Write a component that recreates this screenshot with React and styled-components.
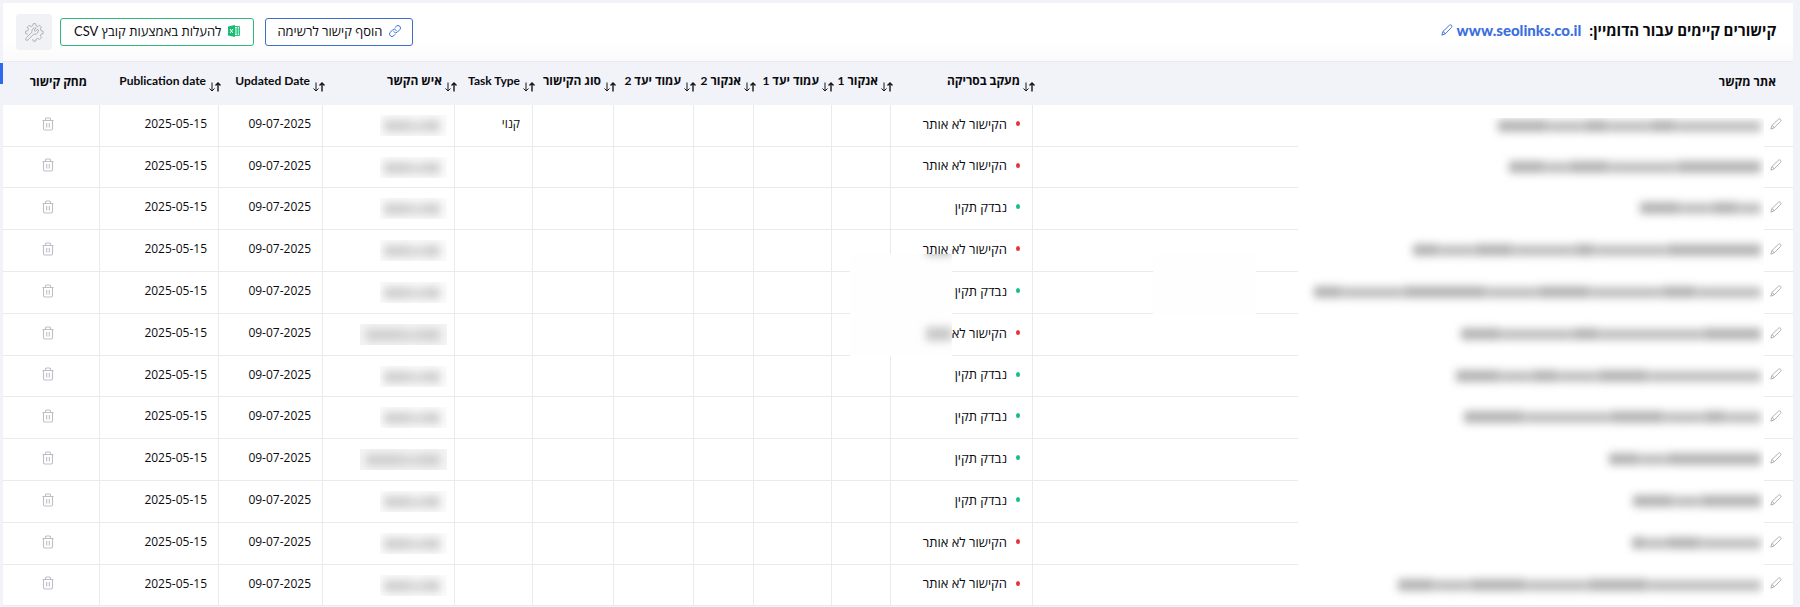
import React, { useState } from "react";
import styled, { createGlobalStyle } from "styled-components";

const GlobalStyle = createGlobalStyle`
  * {
    box-sizing: border-box;
  }
  body {
    margin: 0;
    background-color: #f1f3f9;
    color: #0b0b0f;
    font-family: Lato, "Open Sans", "Noto Sans", "Liberation Sans", sans-serif;
    font-size: 12px;
  }
  button {
    font-family: inherit;
    cursor: pointer;
  }
`;

const Page = styled.div`
  display: flex;
  align-items: flex-start;
  padding: 3px 7px 0 0;
`;

const SideTab = styled.div`
  flex: none;
  width: 3px;
  height: 21px;
  margin-top: 60px;
  background-color: #2f68f0;
`;

const Card = styled.main`
  flex: 1;
  min-width: 0;
  background-color: white;
  border-radius: 2px;
`;

const Toolbar = styled.header`
  display: flex;
  justify-content: space-between;
  align-items: center;
  height: 58px;
  padding: 0 17px 0 13px;
  background: linear-gradient(white 65%, #fafafc);
`;

const Title = styled.h1`
  display: flex;
  align-items: center;
  gap: 8px;
  margin: 0;
  padding-bottom: 4px;
  font-size: 15px;
  font-weight: 700;
  line-height: 20px;
`;

const Domain = styled.div`
  display: flex;
  align-items: center;
  gap: 4px;
`;

const DomainLink = styled.a`
  color: #3b6fe0;
  font-weight: 900;
  text-decoration: none;
`;

const Actions = styled.div`
  display: flex;
  align-items: center;
  gap: 11px;
`;

const ActionButton = styled.button`
  display: flex;
  align-items: center;
  gap: 7px;
  height: 28px;
  padding: 0 ${(props) => props.$pad}px 2px;
  border: 1px solid ${(props) => props.$color};
  border-radius: 3px;
  background-color: white;
  color: #0b0b0f;
  font-size: 13px;
`;

const SettingsButton = styled.button`
  display: flex;
  align-items: center;
  justify-content: center;
  width: 36px;
  height: 36px;
  margin-right: -3px;
  padding: 0;
  border: none;
  border-radius: 3px;
  background-color: #f1f2f6;
`;

const IconButton = styled.button`
  display: flex;
  padding: 0;
  border: none;
  background: none;
`;

const Table = styled.table`
  width: 100%;
  table-layout: fixed;
  border-collapse: separate;
  border-spacing: 0;
`;

const Column = styled.col`
  width: ${(props) => (props.$width ? `${props.$width}px` : "auto")};
`;

const HeadCell = styled.th`
  height: 44px;
  padding: 0 ${(props) => props.$pad}px 5px 0;
  border-top: 1px solid #e9ebf1;
  background-color: #f1f3f8;
  font-size: 12px;
  font-weight: 700;
  text-align: right;
  white-space: nowrap;
`;

const SortButton = styled.button`
  display: flex;
  align-items: center;
  gap: 3px;
  margin-right: -3px;
  padding: 0;
  border: none;
  background: none;
  color: inherit;
  font-size: 12px;
  font-weight: 700;
  line-height: 18px;

  svg {
    margin-top: 12px;
  }
`;

const Row = styled.tr`
  height: 42px;

  &:nth-child(5n + 2) {
    height: 41px;
  }
`;

const Cell = styled.td`
  position: relative;
  padding: 0 12px 4px 0;
  border-bottom: 1px solid #e9eaee;
  border-left: ${(props) => (props.$last ? "none" : "1px solid #e9eaee")};
  white-space: nowrap;
`;

const SiteCell = styled(Cell)`
  padding-right: 11px;
`;

const DateCell = styled(Cell)`
  padding-right: 11px;
  font-family: "Open Sans", "Noto Sans", sans-serif;
`;

const Status = styled.div`
  display: flex;
  align-items: center;
  gap: 9px;
  font-size: 13px;
  line-height: 18px;
`;

const Dot = styled.span`
  width: 4px;
  height: 5px;
  border-radius: 50%;
  background-color: ${(props) => (props.$ok ? "#12c07c" : "#e8303a")};
`;

const Centered = styled.div`
  display: flex;
  justify-content: center;
  padding-left: 6px;
`;

// covers the private part of a cell, lines included
const SiteMask = styled.div`
  position: absolute;
  top: ${(props) => (props.$first ? 13 : 0)}px;
  bottom: ${(props) => (props.$last ? 0 : -1)}px;
  right: 29px;
  width: 466px;
  overflow: hidden;
  background-color: white;
`;

const ContactMask = styled.div`
  width: ${(props) => (props.$wide ? 87 : 67)}px;
  height: 21px;
  margin: 4px -5px 0 0;
  padding: 5px 4px;
  overflow: hidden;
  background-color: ${(props) => (props.$wide ? "#f4f4f4" : "#fbfbfb")};
`;

const Smudge = styled.div`
  display: flex;
  direction: ltr;
  justify-content: flex-end;
  gap: 1px;
  margin-top: ${(props) => props.$top}px;
  padding-right: 3px;
  filter: blur(4px);

  i {
    height: 12px;
    background-color: ${(props) => props.$color};
  }
  i:nth-child(2n) {
    height: 11px;
    margin-top: 1px;
    opacity: 0.85;
  }
`;

const Patch = styled.div`
  position: absolute;
  top: ${(props) => props.$top || 0}px;
  bottom: -1px;
  left: ${(props) => props.$left}px;
  right: ${(props) => props.$right}px;
  z-index: 1;
  background-color: #fefefe;
  overflow: hidden;
`;

const Stain = styled.div`
  width: 26px;
  height: 14px;
  margin-top: ${(props) => props.$top}px;
  background-color: ${(props) => props.$color};
  filter: blur(4px);
`;

const columns = [
  { label: "אתר מקשר", pad: 17 },
  { label: "מעקב בסריקה", width: 142, sort: true },
  { label: "אנקור 1", width: 59, sort: true },
  { label: "עמוד יעד 1", width: 78, sort: true },
  { label: "אנקור 2", width: 60, sort: true },
  { label: "עמוד יעד 2", width: 80, sort: true },
  { label: "סוג הקישור", width: 81, sort: true },
  { label: "Task Type", width: 78, sort: true },
  { label: "איש הקשר", width: 132, sort: true },
  { label: "Updated Date", width: 104, sort: true },
  { label: "Publication date", width: 119, sort: true },
  { label: "מחק קישור", width: 96, pad: 12 },
];

// site: widths of the hidden words, left to right
const links = [
  { ok: false, site: [50, 34, 24, 40, 26, 84], task: "קנוי" },
  { ok: false, site: [36, 22, 40, 66, 84] },
  { ok: true, site: [40, 30, 26, 22] },
  { ok: false, site: [26, 34, 38, 60, 20, 70, 94], patch: "below" },
  { ok: true, site: [28, 60, 82, 50, 52, 70, 34, 64], patch: "full" },
  { ok: false, site: [40, 70, 26, 102, 58], patch: "word", wide: true },
  { ok: true, site: [44, 30, 26, 38, 50, 112] },
  { ok: true, site: [60, 84, 54, 38, 22, 34] },
  { ok: true, site: [30, 26, 94], wide: true },
  { ok: true, site: [40, 26, 60] },
  { ok: false, site: [14, 18, 34, 60] },
  { ok: false, site: [36, 34, 56, 60, 60, 112] },
];

function PencilIcon({ color = "#a9adb6" }) {
  return (
    <svg width="12" height="12" viewBox="0 0 14 14" fill="none" stroke={color} strokeWidth="1.1" strokeLinejoin="round">
      <path d="M1 13 2.200 8.800 9.800 1.500q1.200-1.100 2.500 0 1.100 1.300 0 2.500L4.800 11.600zM2.200 8.800q2 .6 2.600 2.800" />
    </svg>
  );
}

function LinkIcon() {
  return (
    <svg width="12" height="12" viewBox="0 0 24 24" fill="none" stroke="#3b6fe0" strokeWidth="2" strokeLinecap="round">
      <path d="M9.500 13.500a5 5 0 0 0 7.500.5l4.500-4.500a4.900 4.900 0 0 0-7-7l-2.500 2.500" />
      <path d="M14.500 10.500a5 5 0 0 0-7.500-.5l-4.500 4.500a4.900 4.900 0 0 0 7 7l2.500-2.500" />
    </svg>
  );
}

function ExcelIcon() {
  return (
    <svg width="12" height="12" viewBox="0 0 12 12">
      <path d="M0 1.500 7 0v12L0 10.500z" fill="#18bd74" />
      <path d="M2 4l3 4M5 4 2 8" stroke="white" strokeWidth="1" />
      <path d="M7 1.500h4.500v9H7M7 4h4.500M7 6h4.500M7 8h4.500M9.300 1.500v9" fill="none" stroke="#18bd74" strokeWidth="0.9" />
    </svg>
  );
}

function GearIcon() {
  return (
    <svg width="20" height="20" viewBox="0 0 24 24" fill="none" stroke="#a9acb5" strokeWidth="1.1" strokeLinejoin="round">
      <path d="M4.500 14.600 2 14v-3l2.600-.6.8-1.900L4 6.200 6.200 4l2.300 1.400 1.900-.8L11 2h3l.6 2.600 1.900.8L18.800 4 21 6.200l-1.400 2.300.8 1.900 2.600.6v3l-2.600.6-.8 1.900 1.400 2.300-2.200 2.200-2.300-1.400-1.900.8L14 23h-3l-.6-2.500" />
      <path d="M16.500 8.500 14 11l-1.300-.3-.3-1.300 2.200-2.300a4 4 0 0 0-5 5L2.500 19.200q-1.200 1.300-.1 2.400t2.400-.1l7-7a4 4 0 0 0 4.700-6z" />
    </svg>
  );
}

function TrashIcon() {
  return (
    <svg width="12" height="14" viewBox="0 0 12 14" fill="none" stroke="#bcbfc6" strokeWidth="1.1">
      <path d="M.5 3.500h11M3.500 3.500v-1.500q0-1 1-1h3q1 0 1 1v1.500M1.500 3.500v8q0 1.500 1.500 1.500h6q1.500 0 1.500-1.500v-8M4.700 6v4.500M7.300 6v4.500" />
    </svg>
  );
}

function SortIcon() {
  return (
    <svg width="12" height="10" viewBox="0 0 12 10" fill="none" stroke="#15151a">
      <path d="M3 .5v8.500M.5 6.500 3 9l2.500-2.500" strokeWidth="1" />
      <path d="M9 9.500V1M6.500 3.500 9 1l2.500 2.500" strokeWidth="1.4" />
    </svg>
  );
}

function Hidden({ words, top, color }) {
  return (
    <Smudge $top={top} $color={color}>
      {words.map((w, index) => (
        <i key={index} style={{ width: w }} />
      ))}
    </Smudge>
  );
}

function LinkRow({ link, first, last, onDelete }) {
  const patchTop = link.patch === "below" ? 24 : 0;

  return (
    <Row>
      <SiteCell>
        <IconButton aria-label="עריכה">
          <PencilIcon />
        </IconButton>
        <SiteMask $first={first} $last={last}>
          <Hidden words={link.site} top={first ? 2 : 14} color="#b4b4b4" />
        </SiteMask>
        {(link.patch === "below" || link.patch === "full") && <Patch $top={patchTop} $left={120} $right={537} />}
      </SiteCell>
      <Cell>
        <Status>
          <Dot $ok={link.ok} />
          {link.ok ? "נבדק תקין" : "הקישור לא אותר"}
        </Status>
        {link.patch && (
          <Patch $top={patchTop} $left={-1} $right={80}>
            {link.patch === "below" && <Stain $top={-13} $color="#b4b4b4" />}
            {link.patch === "word" && <Stain $top={13} $color="#c8c8c8" />}
          </Patch>
        )}
      </Cell>
      <Cell>{link.patch && <Patch $top={patchTop} $left={18} $right={0} />}</Cell>
      <Cell />
      <Cell />
      <Cell />
      <Cell />
      <Cell>{link.task}</Cell>
      <Cell>
        <ContactMask $wide={link.wide}>
          <Hidden words={link.wide ? [38, 12, 22] : [28, 10, 18]} top={0} color="#cfcfcf" />
        </ContactMask>
      </Cell>
      <DateCell>09-07-2025</DateCell>
      <DateCell>2025-05-15</DateCell>
      <Cell $last>
        <Centered>
          <IconButton aria-label="מחק קישור" onClick={onDelete}>
            <TrashIcon />
          </IconButton>
        </Centered>
      </Cell>
    </Row>
  );
}

function App() {
  const [rows, setRows] = useState(links);

  return (
    <>
      <GlobalStyle />
      <Page>
        <SideTab />
        <Card dir="rtl">
          <Toolbar>
            <Title>
              קישורים קיימים עבור הדומיין:
              <Domain>
                <DomainLink href="#">www.seolinks.co.il</DomainLink>
                <IconButton aria-label="עריכת דומיין">
                  <PencilIcon color="#3b6fe0" />
                </IconButton>
              </Domain>
            </Title>
            <Actions>
              <ActionButton $color="#3b6fc8" $pad={11}>
                <LinkIcon />
                הוסף קישור לרשימה
              </ActionButton>
              <ActionButton $color="#2fb67c" $pad={13}>
                <ExcelIcon />
                להעלות באמצעות קובץ CSV
              </ActionButton>
              <SettingsButton aria-label="הגדרות">
                <GearIcon />
              </SettingsButton>
            </Actions>
          </Toolbar>
          <Table>
            <colgroup>
              {columns.map((col) => (
                <Column key={col.label} $width={col.width} />
              ))}
            </colgroup>
            <thead>
              <tr>
                {columns.map((col) => (
                  <HeadCell key={col.label} $pad={col.pad || 0}>
                    {col.sort ? (
                      <SortButton>
                        <SortIcon />
                        <span>{col.label}</span>
                      </SortButton>
                    ) : (
                      col.label
                    )}
                  </HeadCell>
                ))}
              </tr>
            </thead>
            <tbody>
              {rows.map((link, index) => (
                <LinkRow
                  key={index}
                  link={link}
                  first={index === 0}
                  last={index === rows.length - 1}
                  onDelete={() => setRows(rows.filter((r) => r !== link))}
                />
              ))}
            </tbody>
          </Table>
        </Card>
      </Page>
    </>
  );
}

export default App;
